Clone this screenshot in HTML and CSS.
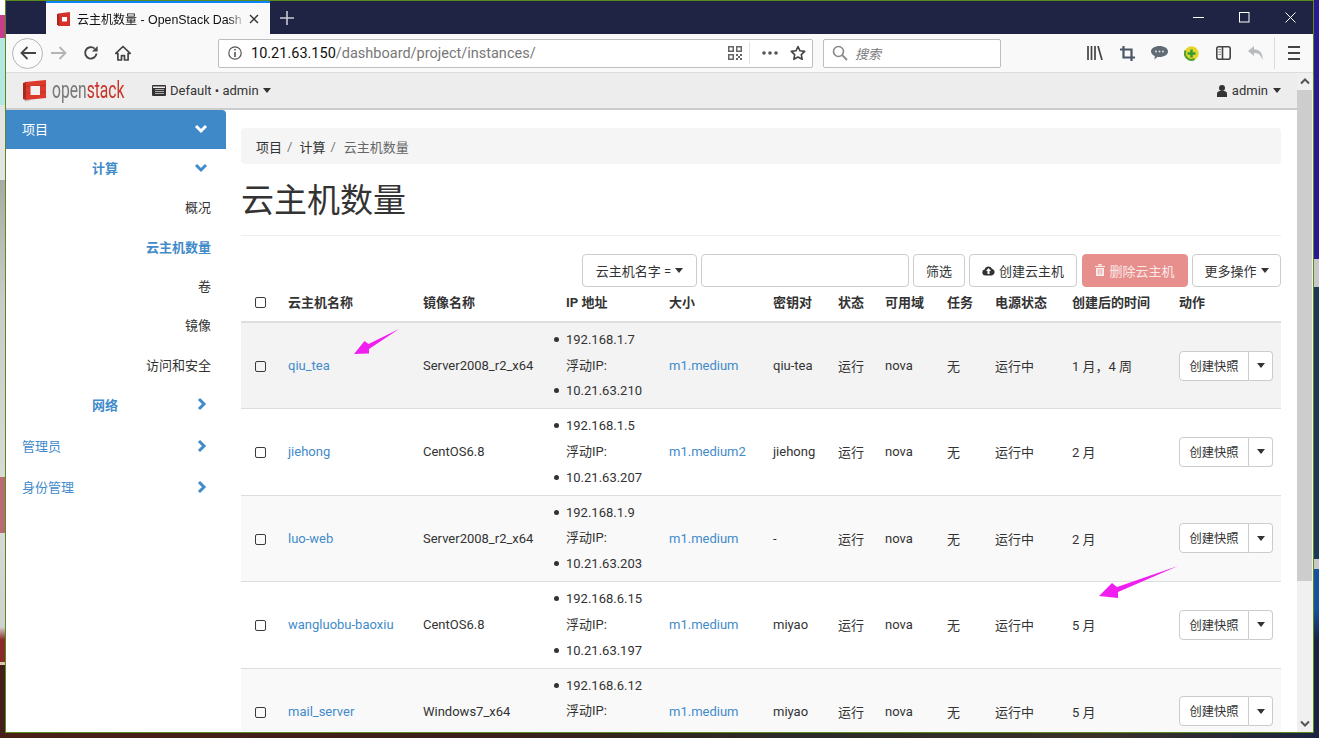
FILE: index.html
```html
<!DOCTYPE html>
<html lang="zh-CN">
<head>
    <meta charset="UTF-8">
    <title>云主机数量 - OpenStack Dashboard</title>
    <link rel="stylesheet" href="styles.css">
</head>
<body>
<div class="desktop">
    <div class="window">
        <div class="tabbar">
            <div class="tab">
                <svg class="favicon" width="14" height="14" viewBox="0 0 14 14"><path d="M1 1.500 13 0v14H1z" fill="#d2322a"/><path d="M0 2h2v11H0z" fill="#a82620"/><rect x="5" y="5" width="5" height="4.500" fill="#fff"/></svg>
                <span class="tab-title"><span class="tab-cjk">云主机数量</span> - OpenStack Dash</span>
                <svg class="tab-close" width="10" height="10" viewBox="0 0 10 10"><path d="M1 1l8 8M9 1L1 9" stroke="#333" stroke-width="1.400"/></svg>
            </div>
            <svg class="newtab" width="14" height="14" viewBox="0 0 14 14"><path d="M7 0v14M0 7h14" stroke="#c8cad4" stroke-width="1.600"/></svg>
            <div class="winctrls">
                <div class="winctrl"><svg width="11" height="11" viewBox="0 0 11 11"><path d="M0 5.500h11" stroke="#fff"/></svg></div>
                <div class="winctrl"><svg width="11" height="11" viewBox="0 0 11 11"><rect x=".5" y=".5" width="9.500" height="9.500" fill="none" stroke="#fff"/></svg></div>
                <div class="winctrl"><svg width="11" height="11" viewBox="0 0 11 11"><path d="M.5.5l10 10M10.500.5l-10 10" stroke="#fff"/></svg></div>
            </div>
        </div>

        <div class="toolbar">
            <div class="backbtn"><svg width="16" height="14" viewBox="0 0 16 14"><path d="M7.500 1 1.500 7l6 6M1.500 7H16" fill="none" stroke="#444" stroke-width="1.800"/></svg></div>
            <div class="tbicon"><svg width="16" height="14" viewBox="0 0 16 14"><path d="M8.500 1l6 6-6 6M14.500 7H0" fill="none" stroke="#b4b4b6" stroke-width="1.800"/></svg></div>
            <div class="tbicon"><svg width="16" height="16" viewBox="0 0 16 16"><path d="M13.500 8.500A5.700 5.700 0 1 1 11.600 3.600" fill="none" stroke="#444" stroke-width="1.900"/><path d="M14.600 1v5.600H9z" fill="#444"/></svg></div>
            <div class="tbicon"><svg width="16" height="16" viewBox="0 0 16 16"><path d="M8 1.500.8 8.400h2.100V15h3.600v-4.400h3V15h3.600V8.400h2.100z" fill="none" stroke="#444" stroke-width="1.700" stroke-linejoin="round"/></svg></div>
            <div class="urlbar">
                <svg class="urlinfo" width="14" height="14" viewBox="0 0 14 14"><circle cx="7" cy="7" r="6.200" fill="none" stroke="#555" stroke-width="1.200"/><path d="M6.200 3h1.600v1.600H6.200zM6.200 6h1.600v5H6.200z" fill="#555"/></svg>
                <span class="urltext"><span class="urlhost">10.21.63.150</span>/dashboard/project/instances/</span>
                <svg class="qr" width="14" height="14" viewBox="0 0 14 14"><path d="M0 0h6v6H0zM1.500 1.500v3h3v-3zM8 0h6v6H8zM9.500 1.500v3h3v-3zM0 8h6v6H0zM1.500 9.500v3h3v-3zM8 8h2v2H8zM12 8h2v2h-2zM10 10h2v2h-2zM8 12h2v2H8zM12 12h2v2h-2z" fill="#666" fill-rule="evenodd"/></svg>
                <span class="urlsep"></span>
                <svg class="dots" width="16" height="4" viewBox="0 0 16 4"><circle cx="2" cy="2" r="1.800" fill="#555"/><circle cx="8" cy="2" r="1.800" fill="#555"/><circle cx="14" cy="2" r="1.800" fill="#555"/></svg>
                <svg class="star" width="16" height="16" viewBox="0 0 16 16"><path d="M8 1.500l2 4.300 4.700.6-3.400 3.200.9 4.700L8 12l-4.200 2.300.9-4.700L1.300 6.400 6 5.800z" fill="none" stroke="#444" stroke-width="1.600" stroke-linejoin="round"/></svg>
            </div>
            <div class="searchbar">
                <svg width="16" height="16" viewBox="0 0 16 16"><circle cx="6.500" cy="6.500" r="5" fill="none" stroke="#888" stroke-width="1.600"/><path d="M10.200 10.200 15 15" stroke="#888" stroke-width="1.800"/></svg>
                <span class="searchhint">搜索</span>
            </div>
            <div class="tbright">
                <div class="tbicon"><svg width="16" height="14" viewBox="0 0 16 14"><path d="M1 0v14M4.500 0v14M8 0v14M11 0l4 14" fill="none" stroke="#444" stroke-width="1.700"/></svg></div>
                <div class="tbicon"><svg width="15" height="15" viewBox="0 0 15 15"><path d="M3.500 0v11.500H15M0 3.500h11.500V15" fill="none" stroke="#4a5666" stroke-width="2.200"/></svg></div>
                <div class="tbicon"><svg width="17" height="14" viewBox="0 0 17 14"><path d="M8.500 0C13 0 17 2.300 17 5.500S13 11 8.500 11c-.7 0-1.300 0-2-.2L3.500 13.500l.3-3.500C1.500 9 0 7.400 0 5.500 0 2.300 4 0 8.500 0z" fill="#606a74"/><circle cx="5" cy="5.500" r="1" fill="#d8dce0"/><circle cx="8.500" cy="5.500" r="1" fill="#d8dce0"/><circle cx="12" cy="5.500" r="1" fill="#d8dce0"/></svg></div>
                <div class="tbicon"><svg width="15" height="15" viewBox="0 0 15 15"><circle cx="7.500" cy="7.500" r="7.200" fill="#e6d62a"/><path d="M1.600 4.500a6.500 6.500 0 0 0 9 8.500" fill="none" stroke="#4fa030" stroke-width="2"/><path d="M6.300 3.500h2.400v2.800h2.800v2.400H8.700v2.800H6.300V8.700H3.500V6.300h2.800z" fill="#2f9a3c"/></svg></div>
                <div class="tbicon"><svg width="15" height="14" viewBox="0 0 15 14"><rect x=".8" y=".8" width="13.400" height="12.400" rx="2" fill="none" stroke="#444" stroke-width="1.600"/><path d="M6.500 1v12" stroke="#444" stroke-width="1.600"/><path d="M2.500 3.500h2.500M2.500 6h2.500M2.500 8.500h2.500" stroke="#888"/></svg></div>
                <div class="tbicon"><svg width="15" height="14" viewBox="0 0 15 14"><path d="M6 0 0 5l6 5V7c3.500 0 6 .8 7.300 4.500.5 1 .8 1.500 1 2.500C15.500 8 12 3.500 6 3.200z" fill="#b8bbbe"/></svg></div>
                <span class="tbsep"></span>
                <div class="hamburger"><span></span><span></span><span></span></div>
            </div>
        </div>

        <div class="page">
            <div class="page-main">
                <div class="navbar">
                    <svg class="logo" width="25" height="24" viewBox="0 0 25 24"><path d="M3 3 24 1v18L4 21z" fill="#dc3a2c"/><path d="M1 4l3-1v18l-3-1z" fill="#a92a20"/><path d="M4 7.500l20-1M4 14l20-1" stroke="#b92e23" stroke-width=".7"/><rect x="8.500" y="7" width="9.500" height="9" fill="#f4f1f0"/><path d="M0 20l4 1.500 5-.5-5 1.500z" fill="#aaa"/></svg>
                    <span class="logotext"><span class="logotext-in"><span class="logo-open">open</span><span class="logo-stack">stack</span></span></span>
                    <svg class="domainicon" width="14" height="11" viewBox="0 0 14 11"><rect width="14" height="11" rx="1" fill="#333"/><path d="M1 1.500h12v1.500H1z" fill="#eee"/><path d="M3 4.500h9M3 6.500h9M3 8.500h9" stroke="#bbb" stroke-width=".9"/></svg>
                    <span>Default • admin</span>
                    <span class="caret caret-nav"></span>
                    <div class="navright">
                        <svg width="10" height="12" viewBox="0 0 10 12"><circle cx="5" cy="3" r="3" fill="#333"/><path d="M0 12V8.500C0 7 1.500 6 3 6h4c1.500 0 3 1 3 2.500V12z" fill="#333"/></svg>
                        <span>admin</span>
                        <span class="caret"></span>
                    </div>
                </div>
                <div class="page-body">
                    <div class="sidebar">
                        <div class="side-item side-active">项目<svg class="chev" width="14" height="10" viewBox="0 0 14 10"><path d="M2 2l5 5 5-5" fill="none" stroke="#fff" stroke-width="3"/></svg></div>
                        <div class="side-item side-group">计算<svg class="chev" width="14" height="10" viewBox="0 0 14 10"><path d="M2 2l5 5 5-5" fill="none" stroke="#428bca" stroke-width="3"/></svg></div>
                        <div class="side-link">概况</div>
                        <div class="side-link side-current">云主机数量</div>
                        <div class="side-link">卷</div>
                        <div class="side-link">镜像</div>
                        <div class="side-link">访问和安全</div>
                        <div class="side-item side-group">网络<svg class="chev chev-right" width="10" height="14" viewBox="0 0 10 14"><path d="M2 2l5 5-5 5" fill="none" stroke="#428bca" stroke-width="3"/></svg></div>
                        <div class="side-item side-top">管理员<svg class="chev chev-right" width="10" height="14" viewBox="0 0 10 14"><path d="M2 2l5 5-5 5" fill="none" stroke="#428bca" stroke-width="3"/></svg></div>
                        <div class="side-item side-top">身份管理<svg class="chev chev-right" width="10" height="14" viewBox="0 0 10 14"><path d="M2 2l5 5-5 5" fill="none" stroke="#428bca" stroke-width="3"/></svg></div>
                    </div>
                    <div class="content">
                        <div class="breadcrumb">
                            <span>项目</span><span class="crumbsep">/</span>
                            <span>计算</span><span class="crumbsep">/</span>
                            <span class="crumbnow">云主机数量</span>
                        </div>
                        <h1 class="title">云主机数量</h1>
                        <div class="actions">
                            <div class="btn btn-select">云主机名字 = <span class="caret"></span></div>
                            <div class="filterinput"></div>
                            <div class="btn btn-filter">筛选</div>
                            <div class="btn btn-create"><svg width="13" height="11" viewBox="0 0 13 11"><path d="M3 10.500A3 3 0 0 1 2.500 4.600 4 4 0 0 1 10 3.700a3.500 3.500 0 0 1 0 6.800z" fill="#333"/><path d="M6.500 3 9 6H7.500v3h-2V6H4z" fill="#fff"/></svg>创建云主机</div>
                            <div class="btn btn-delete"><svg width="10" height="12" viewBox="0 0 10 12"><path d="M0 2h10v1H0zM3.500 0h3l.5 1.500H3zM1 4h8v8H1z" fill="#fff" opacity=".85"/><path d="M3.300 5v5.500M5 5v5.500M6.700 5v5.500" stroke="#e68f8c" stroke-width=".7"/></svg>删除云主机</div>
                            <div class="btn btn-more">更多操作 <span class="caret"></span></div>
                        </div>
                        <table class="instances">
                            <colgroup>
                                <col class="c-check"><col class="c-name"><col class="c-image"><col class="c-ip"><col class="c-size"><col class="c-key"><col class="c-state"><col class="c-zone"><col class="c-task"><col class="c-power"><col class="c-age"><col class="c-act">
                            </colgroup>
                            <thead>
                                <tr>
                                    <th class="cell-check"><span class="checkbox"></span></th>
                                    <th>云主机名称</th><th>镜像名称</th><th>IP 地址</th><th>大小</th><th>密钥对</th><th>状态</th><th>可用域</th><th>任务</th><th>电源状态</th><th>创建后的时间</th><th>动作</th>
                                </tr>
                            </thead>
                            <tbody>
                                <tr class="row-hover">
                                    <td class="cell-check"><span class="checkbox"></span></td>
                                    <td><a>qiu_tea</a></td><td>Server2008_r2_x64</td>
                                    <td><ul class="iplist"><li>192.168.1.7</li></ul><div class="iplabel">浮动IP:</div><ul class="iplist"><li>10.21.63.210</li></ul></td>
                                    <td><a>m1.medium</a></td><td>qiu-tea</td><td>运行</td><td>nova</td><td>无</td><td>运行中</td><td>1 月，4 周</td>
                                    <td><div class="split"><div class="split-main">创建快照</div><div class="split-caret"><span class="caret"></span></div></div></td>
                                </tr>
                                <tr>
                                    <td class="cell-check"><span class="checkbox"></span></td>
                                    <td><a>jiehong</a></td><td>CentOS6.8</td>
                                    <td><ul class="iplist"><li>192.168.1.5</li></ul><div class="iplabel">浮动IP:</div><ul class="iplist"><li>10.21.63.207</li></ul></td>
                                    <td><a>m1.medium2</a></td><td>jiehong</td><td>运行</td><td>nova</td><td>无</td><td>运行中</td><td>2 月</td>
                                    <td><div class="split"><div class="split-main">创建快照</div><div class="split-caret"><span class="caret"></span></div></div></td>
                                </tr>
                                <tr class="row-odd">
                                    <td class="cell-check"><span class="checkbox"></span></td>
                                    <td><a>luo-web</a></td><td>Server2008_r2_x64</td>
                                    <td><ul class="iplist"><li>192.168.1.9</li></ul><div class="iplabel">浮动IP:</div><ul class="iplist"><li>10.21.63.203</li></ul></td>
                                    <td><a>m1.medium</a></td><td>-</td><td>运行</td><td>nova</td><td>无</td><td>运行中</td><td>2 月</td>
                                    <td><div class="split"><div class="split-main">创建快照</div><div class="split-caret"><span class="caret"></span></div></div></td>
                                </tr>
                                <tr>
                                    <td class="cell-check"><span class="checkbox"></span></td>
                                    <td><a>wangluobu-baoxiu</a></td><td>CentOS6.8</td>
                                    <td><ul class="iplist"><li>192.168.6.15</li></ul><div class="iplabel">浮动IP:</div><ul class="iplist"><li>10.21.63.197</li></ul></td>
                                    <td><a>m1.medium</a></td><td>miyao</td><td>运行</td><td>nova</td><td>无</td><td>运行中</td><td>5 月</td>
                                    <td><div class="split"><div class="split-main">创建快照</div><div class="split-caret"><span class="caret"></span></div></div></td>
                                </tr>
                                <tr class="row-odd">
                                    <td class="cell-check"><span class="checkbox"></span></td>
                                    <td><a>mail_server</a></td><td>Windows7_x64</td>
                                    <td><ul class="iplist"><li>192.168.6.12</li></ul><div class="iplabel">浮动IP:</div><ul class="iplist"><li>&nbsp;</li></ul></td>
                                    <td><a>m1.medium</a></td><td>miyao</td><td>运行</td><td>nova</td><td>无</td><td>运行中</td><td>5 月</td>
                                    <td><div class="split"><div class="split-main">创建快照</div><div class="split-caret"><span class="caret"></span></div></div></td>
                                </tr>
                            </tbody>
                        </table>
                    </div>
                </div>
            </div>
            <div class="scrollbar">
                <div class="sb-btn"><svg width="10" height="7" viewBox="0 0 10 7"><path d="M1 5.500l4-4 4 4" fill="none" stroke="#555" stroke-width="2"/></svg></div>
                <div class="sb-thumb"></div>
                <div class="sb-btn sb-down"><svg width="10" height="7" viewBox="0 0 10 7"><path d="M1 1.500l4 4 4-4" fill="none" stroke="#555" stroke-width="2"/></svg></div>
            </div>
        </div>
    </div>

    <svg class="mark mark-one" width="50" height="30" viewBox="0 0 50 30"><path d="M46 1 15.500 16l-4-3L1 26l15-.5V21z" fill="#f01ff0"/></svg>
    <svg class="mark mark-two" width="84" height="36" viewBox="0 0 84 36"><path d="M81 1 20 22l-5-4L2 31l19 2v-6z" fill="#f01ff0"/></svg>
</div>
</body>
</html>
```

FILE: styles.css
```css
html, body {
    margin: 0;
    padding: 0;
    height: 100%;
    overflow: hidden;
}
body {
    font-family: Roboto, "Noto Sans CJK SC", sans-serif;
    font-size: 13px;
    color: #333;
}
.desktop {
    position: relative;
    box-sizing: border-box;
    width: 1319px;
    height: 738px;
    padding: 0 5px 5px 5px;
    background-color: #1a2340;
    background-image:
        linear-gradient(to bottom, #fff 0, #fff 15px, #c83d8e 15px, #c83d8e 38px, #b5e6e3 38px, #b5e6e3 105px, #e4e4e4 105px, #e4e4e4 180px, #a8aaa5 180px, #c9ccc8 300px, #d8dad6 477px, #b86b70 477px, #b86b70 533px, #d8d8d6 533px, #d0d2ce 627px, #8a2a2a 640px, #8a2a2a 662px, #d8c8a8 662px, #d8c8a8 665px, #45201a 665px),
        linear-gradient(to bottom, #2a1a90 0, #2a1a90 259px, #c8c8c8 259px, #c8c8c8 287px, #1c3a52 287px, #1c3a52 559px, #c8c8c8 559px, #c8c8c8 569px, #17509c 569px, #17509c 610px, #1a2340 640px),
        linear-gradient(to right, #4a1f18 0, #3a2018 500px, #2a2a28 800px, #3a3028 1100px, #1a2340 1319px);
    background-size: 5px 100%, 6px 100%, 100% 5px;
    background-position: left top, right top, left bottom;
    background-repeat: no-repeat;
    overflow: hidden;
}
.window {
    box-sizing: border-box;
    width: 1309px;
    height: 733px;
    border: 1px solid #5a8a1e;
    display: flex;
    flex-direction: column;
    background-color: #fff;
}

/* browser chrome */
.tabbar {
    flex: none;
    height: 33px;
    background-color: #1f2444;
    display: flex;
    align-items: stretch;
    padding-left: 40px;
}
.tab {
    box-sizing: border-box;
    width: 224px;
    border-top: 2px solid #0a84ff;
    background-color: #f9f9fa;
    display: flex;
    align-items: center;
    padding-left: 11px;
    color: #111;
}
.tab-title {
    margin-left: 6px;
    width: 168px;
    font-family: "Liberation Sans", "Noto Sans CJK SC", sans-serif;
    font-size: 12.400px;
    white-space: nowrap;
    overflow: hidden;
    -webkit-mask-image: linear-gradient(to right, #000 152px, transparent 168px);
    mask-image: linear-gradient(to right, #000 152px, transparent 168px);
}
.tab-cjk {
    font-size: 12px;
}
.tab-close {
    margin-left: 4px;
}
.newtab {
    align-self: center;
    margin-left: 10px;
}
.winctrls {
    margin-left: auto;
    display: flex;
}
.winctrl {
    width: 46px;
    display: flex;
    align-items: center;
    justify-content: center;
}
.toolbar {
    flex: none;
    box-sizing: border-box;
    height: 39px;
    background-color: #f9f9fa;
    border-bottom: 1px solid #ddd;
    display: flex;
    align-items: center;
    padding-left: 6px;
}
.backbtn {
    box-sizing: border-box;
    width: 31px;
    height: 31px;
    border: 1px solid #b5b5b5;
    border-radius: 50%;
    background-color: #fbfbfb;
    display: flex;
    align-items: center;
    justify-content: center;
}
.tbicon {
    width: 32px;
    height: 32px;
    display: flex;
    align-items: center;
    justify-content: center;
}
.urlbar, .searchbar {
    box-sizing: border-box;
    height: 29px;
    background-color: #fff;
    border: 1px solid #bebebe;
    border-radius: 2px;
    display: flex;
    align-items: center;
}
.urlbar {
    width: 595px;
    margin-left: 79px;
}
.urlinfo {
    margin-left: 9px;
}
.urltext {
    margin-left: 9px;
    font-size: 14.500px;
    color: #777;
    white-space: nowrap;
}
.urlhost {
    color: #111;
}
.qr {
    margin-left: auto;
}
.urlsep {
    width: 1px;
    height: 22px;
    background-color: #e2e2e2;
    margin: 0 12px 0 7px;
}
.star {
    margin: 0 6px 0 12px;
}
.searchbar {
    width: 178px;
    margin-left: 10px;
    padding-left: 8px;
}
.searchhint {
    margin-left: 7px;
    font-style: italic;
    color: #777;
}
.tbright {
    margin-left: 78px;
    display: flex;
    align-items: center;
}
.tbsep {
    width: 1px;
    height: 32px;
    margin-left: 3px;
    background-color: #dcdcdc;
}
.hamburger {
    width: 12px;
    margin-left: 13px;
    display: flex;
    flex-direction: column;
    gap: 4px;
}
.hamburger span {
    height: 2px;
    background-color: #444;
}

/* dashboard page */
.page {
    flex: 1;
    min-height: 0;
    display: flex;
}
.page-main {
    flex: 1;
    min-width: 0;
    display: flex;
    flex-direction: column;
}
.navbar {
    flex: none;
    box-sizing: border-box;
    height: 37px;
    background-color: #ededed;
    border-bottom: 2px solid #ccc;
    display: flex;
    align-items: center;
    padding: 0 16px 0 16px;
}
.logo {
    flex: none;
}
.logotext {
    flex: none;
    margin-left: 5px;
    width: 75px;
    height: 28px;
    line-height: 28px;
    font-size: 23px;
    white-space: nowrap;
}
.logotext-in {
    display: inline-block;
    transform: scaleX(.68);
    transform-origin: left center;
}
.logo-open {
    color: #777;
}
.logo-stack {
    color: #c8352b;
}
.domainicon {
    flex: none;
    margin: 0 4px 0 25px;
}
.caret {
    display: inline-block;
    width: 0;
    height: 0;
    border-top: 5px solid #333;
    border-left: 4.500px solid transparent;
    border-right: 4.500px solid transparent;
    vertical-align: 2px;
}
.caret-nav {
    margin-left: 4px;
}
.navright {
    margin-left: auto;
    display: flex;
    align-items: center;
    gap: 5px;
}
.page-body {
    flex: 1;
    min-height: 0;
    display: flex;
    overflow: hidden;
}
.sidebar {
    flex: none;
    width: 220px;
}
.side-item, .side-link {
    box-sizing: border-box;
    height: 39.300px;
    padding-bottom: 2px;
    display: flex;
    align-items: center;
}
.side-item {
    padding-left: 16px;
    color: #428bca;
}
.side-active {
    height: 39px;
    background-color: #3f89c8;
    border-top-right-radius: 4px;
    color: #fff;
}
.side-group {
    padding-left: 86px;
    font-weight: bold;
}
.side-link + .side-group {
    margin-top: 1px;
}
.side-top {
    height: 41px;
}
.side-group + .side-top {
    margin-top: 1px;
}
.side-link {
    justify-content: flex-end;
    padding-right: 15px;
}
.side-current {
    color: #428bca;
    font-weight: bold;
}
.chev {
    margin-left: auto;
    margin-right: 18px;
}
.chev-right {
    margin-right: 19px;
}
.content {
    flex: 1;
    min-width: 0;
    padding: 18px 16px 0 15px;
}
.breadcrumb {
    box-sizing: border-box;
    height: 36px;
    background-color: #f5f5f5;
    border-radius: 4px;
    padding-left: 15px;
    display: flex;
    align-items: center;
}
.crumbsep {
    margin: 0 7px 0 5px;
    color: #777;
}
.crumbnow {
    margin-left: 1px;
    color: #666;
}
.title {
    margin: 0;
    height: 72px;
    box-sizing: border-box;
    border-bottom: 1px solid #eee;
    font-size: 33px;
    font-weight: normal;
    line-height: 74px;
}
.actions {
    margin-top: 18px;
    display: flex;
    justify-content: flex-end;
    gap: 4px;
    height: 33px;
}
.btn, .filterinput {
    box-sizing: border-box;
    height: 33px;
    border: 1px solid #ccc;
    border-radius: 4px;
    background-color: #fff;
}
.btn {
    display: flex;
    align-items: center;
    justify-content: center;
    gap: 4px;
    padding-bottom: 1px;
    white-space: nowrap;
}
.btn-select { width: 115px; }
.filterinput { width: 208px; }
.btn-filter { width: 52px; }
.btn-create { width: 108px; }
.btn-delete {
    width: 106px;
    margin-left: 1px;
    background-color: #e68f8c;
    border-color: #e68f8c;
    color: #fbe9e8;
}
.btn-more { width: 89px; }

.instances {
    width: 1040px;
    table-layout: fixed;
    border-collapse: collapse;
}
.c-check { width: 37px; }
.c-name { width: 135px; }
.c-image { width: 143px; }
.c-ip { width: 103px; }
.c-size { width: 104px; }
.c-key { width: 65px; }
.c-state { width: 47px; }
.c-zone { width: 62px; }
.c-task { width: 48px; }
.c-power { width: 77px; }
.c-age { width: 107px; }
.c-act { width: 112px; }
.instances th {
    box-sizing: border-box;
    height: 35px;
    padding: 0 0 5px 10px;
    text-align: left;
    border-bottom: 2px solid #ddd;
    white-space: nowrap;
}
.instances td {
    box-sizing: border-box;
    height: 86.500px;
    padding: 0 0 0 10px;
    border-bottom: 1px solid #ddd;
    white-space: nowrap;
}
.instances a {
    color: #428bca;
}
.instances .cell-check {
    padding-left: 2px;
    text-align: center;
}
.row-hover td {
    background-color: #f3f3f3;
}
.row-odd td {
    background-color: #f9f9f9;
}
.checkbox {
    display: inline-block;
    box-sizing: border-box;
    width: 11px;
    height: 11px;
    border: 1.500px solid #3a3a3a;
    border-radius: 2px;
    vertical-align: middle;
}
.iplist {
    margin: 0;
    padding: 0;
    list-style: none;
}
.iplist li, .iplabel {
    line-height: 25.600px;
}
.iplist li::before {
    content: "";
    display: inline-block;
    width: 5px;
    height: 5px;
    border-radius: 50%;
    background-color: #333;
    margin: 0 7.500px 2px -12.500px;
}
.split {
    display: flex;
    width: 94px;
    height: 30px;
}
.split-main, .split-caret {
    box-sizing: border-box;
    border: 1px solid #ccc;
    background-color: #fff;
    display: flex;
    align-items: center;
    justify-content: center;
}
.split-main {
    width: 70px;
    font-size: 12.250px;
    border-radius: 4px 0 0 4px;
}
.split-caret {
    width: 24px;
    border-left: none;
    border-radius: 0 4px 4px 0;
}

.scrollbar {
    flex: none;
    width: 16px;
    background-color: #f0f0f0;
    display: flex;
    flex-direction: column;
}
.sb-btn {
    flex: none;
    height: 17px;
    display: flex;
    align-items: center;
    justify-content: center;
}
.sb-down {
    margin-top: auto;
}
.sb-thumb {
    height: 491px;
    width: 15px;
    background-color: #cdcdcd;
}

/* hand-drawn marks on top of the screenshot */
.mark {
    position: absolute;
}
.mark-one {
    left: 353px;
    top: 328px;
}
.mark-two {
    left: 1097px;
    top: 565px;
}
```
